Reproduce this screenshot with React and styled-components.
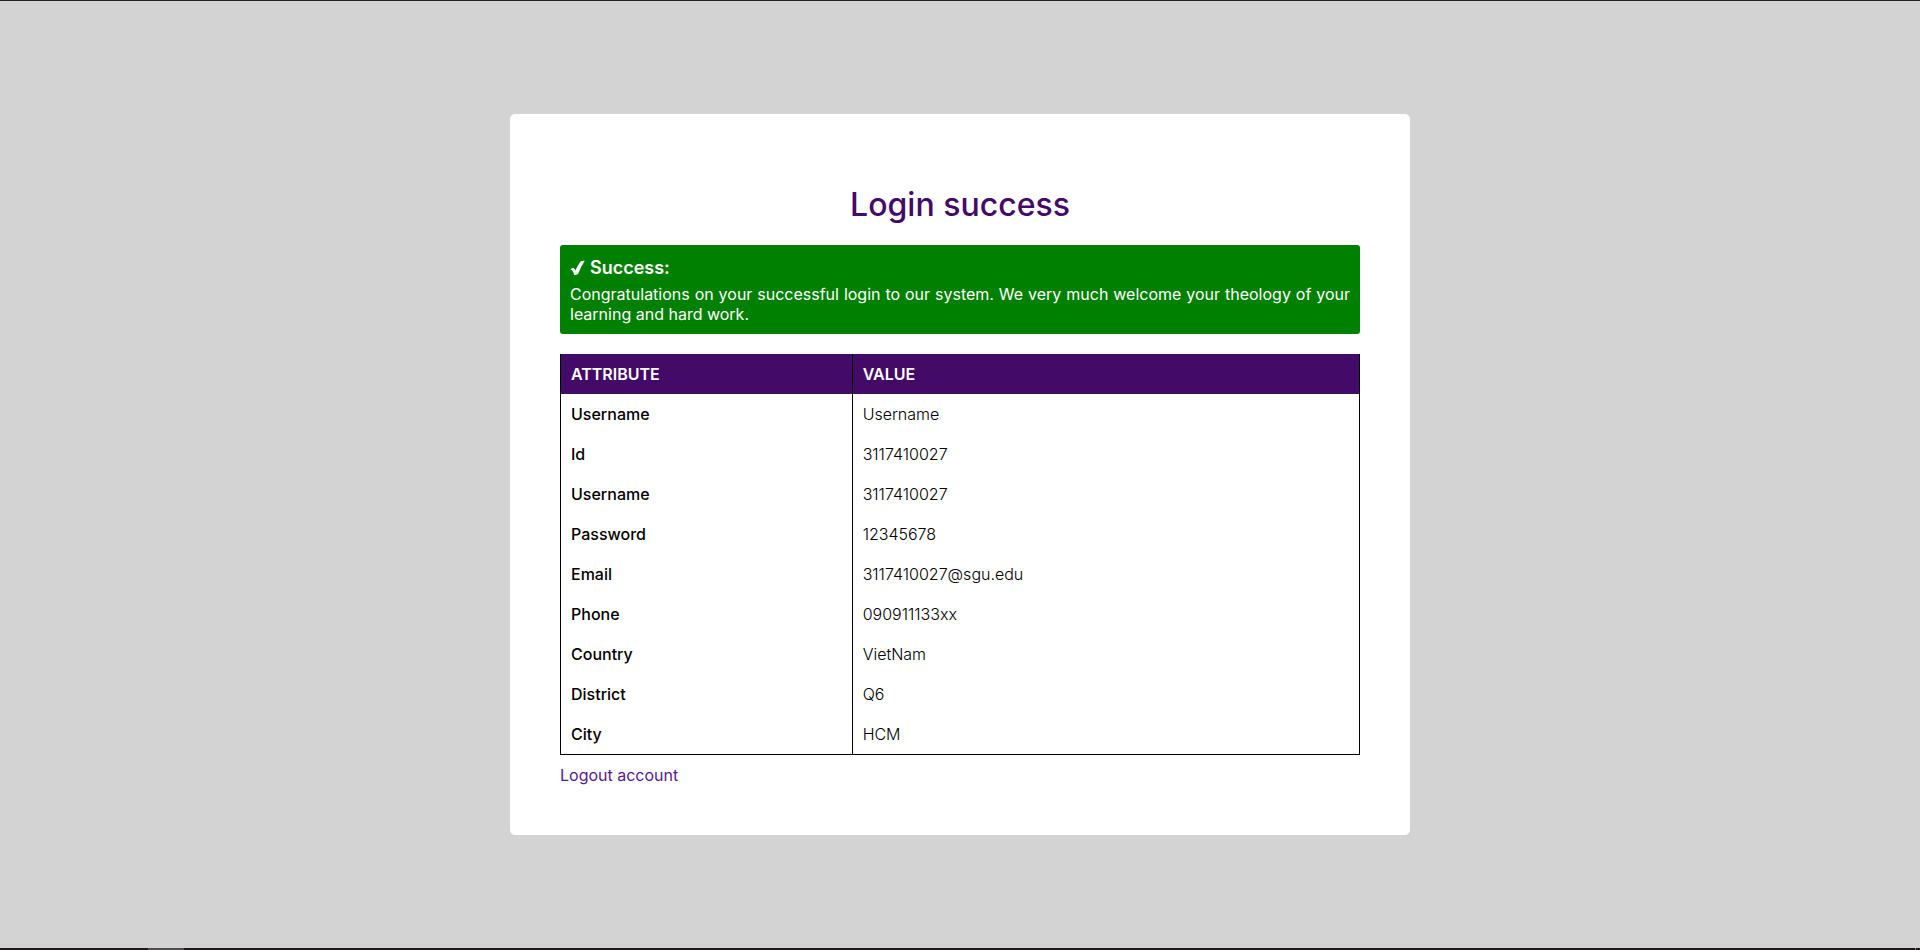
import React from "react";
import styled, { createGlobalStyle } from "styled-components";

const GlobalStyle = createGlobalStyle`
  * { box-sizing: border-box; }
  body {
    margin: 0;
    background: lightgray;
    font-family: Inter, "Liberation Sans", sans-serif;
    font-size: 16px;
    line-height: 20px;
    color: #000;
  }
`;

const Page = styled.div`
  min-height: 100vh;
  display: flex;
  flex-direction: column;
  border-top: 1px solid #231f20;
`;

const Content = styled.main`
  flex: 1;
  display: flex;
  align-items: center;
  justify-content: center;
`;

const BottomBar = styled.footer`
  display: flex;
  height: 2px;
  padding: 0 4px 0 148px;
  justify-content: space-between;
  background: #1d191a;
`;

const BarSegment = styled.span`
  width: ${(p) => p.$width}px;
  background: ${(p) => p.$color};
`;

const Card = styled.section`
  width: 100%;
  max-width: 900px;
  padding: 70px 50px 50px;
  background: #fff;
  border-radius: 5px;
`;

const Title = styled.h1`
  margin: 0 0 20px;
  font-size: 32px;
  line-height: 41px;
  font-weight: 500;
  text-align: center;
  color: #430a67;
`;

const Alert = styled.div`
  padding: 10px;
  margin-bottom: 20px;
  background: green;
  color: #fff;
  border-radius: 3px;
  text-align: justify;
`;

const AlertTitle = styled.h2`
  display: flex;
  align-items: center;
  gap: 5px;
  margin: 0 0 3px;
  font-size: 18px;
  line-height: 26px;
  font-weight: 600;
`;

const AlertText = styled.p`
  margin: 0;
`;

const Table = styled.table`
  width: 100%;
  border-collapse: collapse;
  border: 1px solid #000;
  border-top: none;
  text-align: left;
`;

const HeadCell = styled.th`
  width: ${(p) => p.$width};
  padding: 10px;
  border-right: 1px solid #000;
  background: #430a67;
  color: #fff;
  font-weight: 600;
`;

const NameCell = styled.th`
  padding: 10px;
  border-right: 1px solid #000;
  font-weight: 500;
`;

const ValueCell = styled.td`
  padding: 10px;
  font-weight: 300;
`;

const LogoutLink = styled.a`
  display: block;
  width: fit-content;
  margin-top: 10px;
  color: #551a8b;
  text-decoration: none;
`;

const rows = [
  ["Username", "Username"],
  ["Id", "3117410027"],
  ["Username", "3117410027"],
  ["Password", "12345678"],
  ["Email", "3117410027@sgu.edu"],
  ["Phone", "090911133xx"],
  ["Country", "VietNam"],
  ["District", "Q6"],
  ["City", "HCM"],
];

function CheckIcon() {
  return (
    <svg width="15" height="16" viewBox="0 0 15 16" fill="#fff" aria-hidden="true">
      <path d="M0.5 9.2Q2.5 7.6 4 8.2Q4.8 8.8 5.4 10.6Q7.8 5 10.8 1.2Q12.6 0.4 14.8 0.8Q10.8 6.6 8.4 13.6Q6.6 15.2 4.4 15.2Q3 10.4 0.5 9.2Z" />
    </svg>
  );
}

export default function App() {
  return (
    <>
      <GlobalStyle />
      <Page>
        <Content>
          <Card>
            <Title>Login success</Title>
            <Alert role="status">
              <AlertTitle>
                <CheckIcon />
                Success:
              </AlertTitle>
              <AlertText>
                Congratulations on your successful login to our system. We very
                much welcome your theology of your learning and hard work.
              </AlertText>
            </Alert>
            <Table>
              <thead>
                <tr>
                  <HeadCell scope="col" $width="36.5%">ATTRIBUTE</HeadCell>
                  <HeadCell scope="col" $width="63.5%">VALUE</HeadCell>
                </tr>
              </thead>
              <tbody>
                {rows.map(([name, value], i) => (
                  <tr key={i}>
                    <NameCell scope="row">{name}</NameCell>
                    <ValueCell>{value}</ValueCell>
                  </tr>
                ))}
              </tbody>
            </Table>
            <LogoutLink href="#logout">Logout account</LogoutLink>
          </Card>
        </Content>
        <BottomBar>
          <BarSegment $width={36} $color="#4d4b4c" />
          <BarSegment $width={1} $color="#777" />
        </BottomBar>
      </Page>
    </>
  );
}
